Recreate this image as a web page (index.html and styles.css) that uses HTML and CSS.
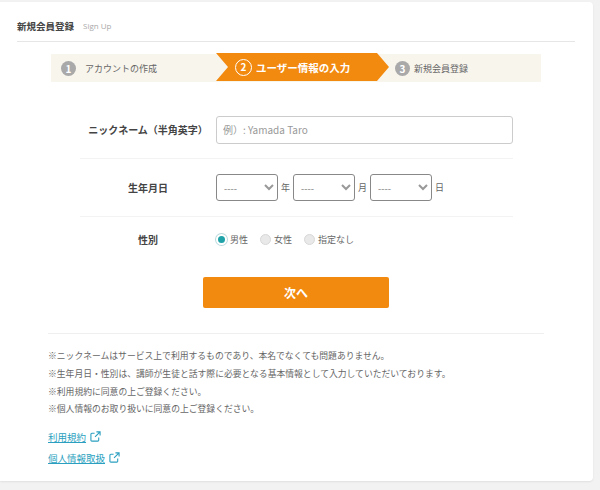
FILE: index.html
```html
<!DOCTYPE html>
<html lang="ja">
<head>
<meta charset="utf-8">
<title>新規会員登録</title>
<link rel="stylesheet" href="styles.css">
</head>
<body>
<main class="card">
  <header class="head"><h1 class="title">新規会員登録</h1><span class="sub">Sign Up</span></header>
  <ol class="steps">
    <li class="step step-first"><span class="num">1</span>アカウントの作成</li>
    <li class="step step-active"><span class="num num-active">2</span>ユーザー情報の入力</li>
    <li class="step step-last"><span class="num">3</span>新規会員登録</li>
  </ol>
  <form class="form">
    <div class="row row-name">
      <label class="label">ニックネーム（半角英字）</label>
      <input class="input" type="text" placeholder="例）: Yamada Taro">
    </div>
    <div class="row row-birth">
      <label class="label">生年月日</label>
      <div class="selects">
        <select class="select"><option>----</option></select><span class="unit">年</span>
        <select class="select"><option>----</option></select><span class="unit">月</span>
        <select class="select"><option>----</option></select><span class="unit">日</span>
      </div>
    </div>
    <div class="row row-gender">
      <label class="label">性別</label>
      <div class="radios">
        <span class="radio"><i class="dot dot-on"></i>男性</span>
        <span class="radio"><i class="dot"></i>女性</span>
        <span class="radio"><i class="dot"></i>指定なし</span>
      </div>
    </div>
    <div class="actions"><button class="next" type="button">次へ</button></div>
  </form>
  <section class="notes">
    <p class="note">※ニックネームはサービス上で利用するものであり、本名でなくても問題ありません。</p>
    <p class="note">※生年月日・性別は、講師が生徒と話す際に必要となる基本情報として入力していただいております。</p>
    <p class="note">※利用規約に同意の上ご登録ください。</p>
    <p class="note">※個人情報のお取り扱いに同意の上ご登録ください。</p>
    <p class="link-row link-row-first"><a class="link" href="#">利用規約</a><svg class="ext" viewBox="0 0 12 12" width="11" height="11"><path d="M9.5 7v3a1 1 0 0 1-1 1H2a1 1 0 0 1-1-1V3.5a1 1 0 0 1 1-1h3M7 1h4v4M11 1 5.5 6.5" fill="none" stroke="#2a9fc0" stroke-width="1.2"/></svg></p>
    <p class="link-row"><a class="link" href="#">個人情報取扱</a><svg class="ext" viewBox="0 0 12 12" width="11" height="11"><path d="M9.5 7v3a1 1 0 0 1-1 1H2a1 1 0 0 1-1-1V3.5a1 1 0 0 1 1-1h3M7 1h4v4M11 1 5.5 6.5" fill="none" stroke="#2a9fc0" stroke-width="1.2"/></svg></p>
  </section>
</main>
</body>
</html>
```
FILE: styles.css
```css
* { box-sizing: border-box; }
html, body { margin: 0; padding: 0; }
body {
  height: 490px;
  overflow: hidden;
  background: #f2f2f2;
  font-family: "Noto Sans CJK JP", "Noto Sans", sans-serif;
  color: #555;
}
.card {
  width: 593px;
  height: 479px;
  margin-top: 2px;
  padding: 0 18px 0 17px;
  background: #fff;
  border-radius: 0 4px 4px 0;
  box-shadow: 0 1px 2px rgba(0,0,0,.08);
}
.head {
  height: 39px;
  padding-top: 15px;
  display: flex;
  align-items: center;
  gap: 9px;
  border-bottom: 1px solid #e6e6e6;
  padding-bottom: 0;
  height: 40px;
  align-items: flex-start;
}
.title { margin: 0; font-size: 9.5px; line-height: 18px; font-weight: 700; color: #444; }
.sub { font-size: 8px; line-height: 18px; color: #aaa; font-family: "Open Sans", sans-serif; }
.steps {
  list-style: none;
  margin: 12px 34px 0;
  padding: 0;
  height: 28px;
  width: 490px;
  display: flex;
  background: #f8f5ed;
  position: relative;
}
.step {
  display: flex;
  align-items: center;
  font-size: 9px;
  color: #666;
  height: 28px;
}
.step-first { width: 165px; padding-left: 10px; }
.step-active {
  width: 173px;
  margin-top: -1px;
  padding-left: 19px;
  font-size: 10.5px;
  font-weight: 700;
  color: #fff;
  background: #f28a10;
  clip-path: polygon(0 0, 161px 0, 100% 50%, 161px 100%, 0 100%, 12px 50%);
}
.step-last { padding-left: 6px; }
.num {
  width: 15px;
  height: 15px;
  border-radius: 50%;
  background: #a9a9a9;
  color: #fff;
  font-size: 10px;
  font-weight: 700;
  line-height: 15px;
  text-align: center;
  margin-right: 9px;
  flex: none;
}
.step-last .num { margin-right: 4px; }
.num-active {
  width: 17px;
  height: 17px;
  background: transparent;
  border: 1.5px solid #fff;
  line-height: 14px;
  margin-right: 4px;
}
.form { margin: 0 62px 0 63px; }
.row { display: flex; align-items: center; }
.label {
  width: 136px;
  padding-right: 0;
  text-align: center;
  font-size: 10px;
  font-weight: 700;
  color: #444;
  flex: none;
  white-space: nowrap;
}
.row-name { margin-top: 34px; height: 42px; padding-bottom: 15px; border-bottom: 1px solid #f3f3f3; height: 43px; }
.input {
  width: 297px;
  height: 28px;
  border: 1px solid #ccc;
  border-radius: 3px;
  padding: 0 6px;
  font: 10px "Noto Sans CJK JP", "Noto Sans", sans-serif;
  color: #555;
  background: #fff;
}
.input::placeholder { color: #999; opacity: 1; }
.row-birth { height: 58px; border-bottom: 1px solid #f3f3f3; }
.selects { display: flex; align-items: center; }
.select {
  width: 62px;
  height: 27px;
  border: 1px solid #888;
  border-radius: 3px;
  background: #fff;
  color: #999;
  font: 10px "Noto Sans", sans-serif;
  padding-left: 3px;
}
.unit { width: 15px; text-align: center; font-size: 9px; color: #666; }
.row-gender { height: 45px; }
.radios { display: flex; align-items: center; gap: 12px; }
.radio { display: flex; align-items: center; font-size: 9px; color: #666; }
.dot {
  width: 11px;
  height: 11px;
  border-radius: 50%;
  background: #e9e9e9;
  border: 1px solid #d8d8d8;
  margin-right: 3px;
}
.dot-on { background: #1fa3a8; border: 2px solid #fff; box-shadow: 0 0 0 1px #b9d9dc; }
.actions { margin-top: 15px; padding-left: 123px; }
.next {
  display: block;
  width: 186px;
  height: 31px;
  border: 0;
  border-radius: 2px;
  background: #f28a10;
  color: #fff;
  font: 700 12px "Noto Sans CJK JP", sans-serif;
}
.notes {
  margin: 25px 31px 0;
  padding-top: 13px;
  border-top: 1px solid #efefef;
}
.note { margin: 0; font-size: 8.8px; line-height: 17.8px; color: #666; white-space: nowrap; }
.link-row { margin: 0; height: 21px; display: flex; align-items: center; font-size: 9.5px; gap: 4px; }
.link-row-first { margin-top: 8px; }
.link { color: #2a9fc0; text-decoration: underline; }
.ext { flex: none; }
```
